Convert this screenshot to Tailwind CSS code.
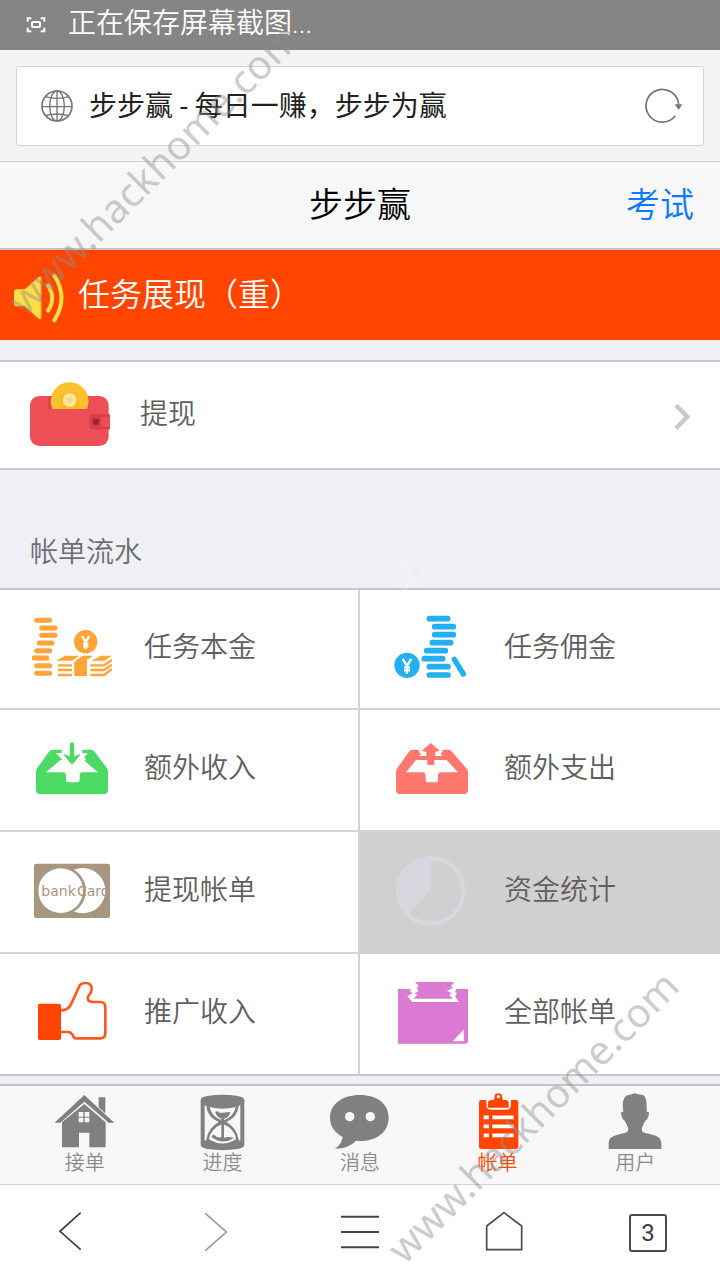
<!DOCTYPE html>
<html lang="zh-CN">
<head>
<meta charset="utf-8">
<meta name="viewport" content="width=device-width, initial-scale=1">
<title>步步赢</title>
<script src="https://cdn.jsdelivr.net/npm/@tailwindcss/browser@4"></script>
</head>
<body class="bg-[#efeff4] font-[Roboto,'Noto_Sans_CJK_SC',sans-serif] font-[350] text-[#5f5f5f]">
<div class="relative flex min-h-screen flex-col overflow-hidden">

  <!-- System status bar -->
  <div class="flex h-[50px] items-center gap-5 bg-[#858585] px-6 text-white">
    <svg class="size-6" viewBox="72 38 72 72" fill="none" stroke="#fff" stroke-width="6" aria-hidden="true">
      <path d="M83 64V54h11M122 54h11v10M133 82v11h-11M94 93H83V82"/><rect x="96" y="65" width="24" height="15" rx="3"/>
    </svg>
    <span class="pb-[2px] text-[28px] leading-[42px]">正在保存屏幕截图...</span>
  </div>

  <!-- Browser address bar -->
  <div class="border-b border-[#cfcfcf] bg-[#f4f4f4] px-4 pt-4 pb-[15px]">
    <div class="flex h-20 items-center rounded-xs border border-[#d6d6d6] bg-white px-6">
      <svg class="size-8 shrink-0" viewBox="123 268 96 96" fill="none" stroke="#757575" stroke-width="5" aria-hidden="true">
        <circle cx="171" cy="316" r="45"/><ellipse cx="171" cy="316" rx="22" ry="45" stroke-width="4"/>
        <path d="M171 271v90M126 318h90M135 288q36 10 72 0M135 345q36-10 72 0" stroke-width="4"/>
      </svg>
      <input type="text" aria-label="网址" value="步步赢 - 每日一赚，步步为赢" class="ml-4 h-14 min-w-0 flex-1 pb-1 text-[28px] font-normal text-[#222] outline-none">
      <button type="button" aria-label="刷新" class="-mr-1 size-10">
        <svg class="size-10" viewBox="849 257 120 120" fill="none" stroke="#757575" stroke-width="5">
          <path d="M946 346a49 49 0 1 1 10-33"/><path d="M944 312h23l-11 16z" fill="#757575" stroke="none"/>
        </svg>
      </button>
    </div>
  </div>

  <!-- Page title bar -->
  <header class="grid h-[88px] grid-cols-3 items-center border-b-2 border-[#c4c4c6] bg-[#f7f7f8] px-[26px] text-[34px] leading-[50px]">
    <h1 class="col-start-2 text-center font-[350] text-black">步步赢</h1>
    <a href="#exam" class="justify-self-end text-[#0a7bff]">考试</a>
  </header>

  <main>
    <a href="#tasks" class="flex h-[90px] items-center gap-[10px] bg-[#ff4500] pl-3 text-white">
      <svg class="size-14" viewBox="36 81 168 168" fill="#ffdd44" aria-hidden="true">
        <path d="M49 148h25l42-37q8-4 8 5v116q0 9-8 4l-42-37H49q-7 0-7-7v-37q0-7 7-7z"/>
        <path d="M123 113v122" stroke="#e89a25" stroke-width="3"/>
        <path d="M144 137q25 36 0 75M163 107q43 66 0 134" fill="none" stroke="#ffdd44" stroke-width="12" stroke-linecap="round"/>
      </svg>
      <span class="text-[32px] leading-[48px]">任务展现（重）</span>
    </a>

    <a href="#withdraw" class="mt-5 flex h-[110px] items-center border-y-2 border-[#c8c7cc] bg-white px-[30px]">
      <svg class="size-20" viewBox="90 405 240 240" aria-hidden="true">
        <rect x="90" y="468" width="236" height="150" rx="28" fill="#ee4e55"/>
        <path d="M145 507v-25q0-14 8-14h106q9 0 9 14v25z" fill="#d9444b"/>
        <path d="M157 507a57 57 0 1 1 104 0z" fill="#fcc12d"/>
        <path d="M180 507v-24a28 28 0 0 1 58 0v24z" fill="#fbb91f"/>
        <circle cx="209" cy="480" r="21" fill="#fde59a"/><circle cx="209" cy="480" r="8" fill="#fbd978"/>
        <path d="M330 523h-52q-9 0-9 9v27q0 9 9 9h52z" fill="#d63f4b"/><path d="M330 530h-27v30h27z" fill="#ee4e55"/>
        <circle cx="288" cy="545" r="10" fill="#a8242d"/>
      </svg>
      <span class="ml-[30px] text-[28px] leading-[42px]">提现</span>
      <svg class="mt-1 -mr-[2px] ml-auto h-7 w-5" viewBox="217 128 60 84" fill="none" stroke="#c7c7cc" stroke-width="13" aria-hidden="true"><path d="M229 135l34 34-34 35"/></svg>
    </a>

    <h2 class="flex h-[118px] items-end px-[30px] pb-[14px] text-[28px] leading-[42px] font-[350] text-[#6d6d72]">帐单流水</h2>

    <nav aria-label="帐单流水" class="grid grid-cols-2 grid-rows-[120px_122px_122px_122px] border-t-2 border-[#c8c7cc] text-[28px] leading-[42px]">
      <a href="#principal" class="flex items-center gap-8 border-r-2 border-b-2 border-[#d3d3d6] bg-white px-8">
        <svg class="size-20" viewBox="96 87 240 240" fill="#ffa437" aria-hidden="true">
          <path d="M110 121h39M125 144h40M125 166h40M118 189h38M110 212h39M101 234h39M110 257h39M110 280h39" stroke="#ffa437" stroke-width="15" stroke-linecap="round"/>
          <circle cx="257" cy="185" r="35"/>
          <path d="M246 168l11 18 11-18M257 186v22M249 191h16M249 199h16" fill="none" stroke="#fff" stroke-width="7"/>
          <path d="M230 239l18-12h32l-19 12v49h-38v-42zM171 241l25-14h41l-20 15h-46zM276 241l27-14h33l-23 15h-37z"/>
          <path d="M174 256h42M174 270h42M174 285h42M271 256h41l24-16M271 270h41l24-16M271 285h41l24-18" fill="none" stroke="#ffa437" stroke-width="7"/>
        </svg>
        <span class="pb-[2px]">任务本金</span>
      </a>
      <a href="#commission" class="flex items-center gap-8 border-b-2 border-[#d3d3d6] bg-white px-8">
        <svg class="size-20" viewBox="126 207 240 240" fill="#22b0f0" aria-hidden="true">
          <path d="M238 236h55M254 260h56M254 284h56M247 308h55M230 332h56M223 356h55M238 380h56M238 405h56" stroke="#22b0f0" stroke-width="17" stroke-linecap="round"/>
          <path d="M313 358l27 44" stroke="#22b0f0" stroke-width="16" stroke-linecap="round"/>
          <circle cx="171" cy="376" r="38"/>
          <path d="M158 357l13 20 13-20M171 377v25M162 382h18M162 391h18" fill="none" stroke="#fff" stroke-width="7"/>
        </svg>
        <span class="pb-[2px]">任务佣金</span>
      </a>
      <a href="#extra-income" class="flex items-center gap-8 border-r-2 border-b-2 border-[#d3d3d6] bg-white px-8">
        <svg class="size-20" viewBox="96 450 240 240" aria-hidden="true">
          <path d="M158 509h116q5 0 10 6l37 50q3 5 3 10v56q0 11-11 11H119q-11 0-11-11v-56q0-5 3-10l36-50q5-6 11-6z" fill="#4cd964"/>
          <path d="M168 519h95l-10 13 6 9h-7l42 36h-46q-9 0-9 9v14q0 7-7 7h-28q-6 0-6-7v-14q0-9-9-9h-51l42-36h8z" fill="#fff"/>
          <path d="M185 507h62v14h-62z" fill="#fff"/>
          <path d="M216 493v45" stroke="#4cd964" stroke-width="13" stroke-linecap="round"/><path d="M192 524l24 9 24-9-24 29z" fill="#4cd964" stroke="#4cd964" stroke-width="3"/>
        </svg>
        <span class="pb-[2px]">额外收入</span>
      </a>
      <a href="#extra-expense" class="flex items-center gap-8 border-b-2 border-[#d3d3d6] bg-white px-8">
        <svg class="size-20" viewBox="126 570 240 240" aria-hidden="true">
          <path d="M188 629h108q5 0 10 6l44 51q4 5 4 10v55q0 11-11 11H149q-11 0-11-11v-55q0-5 3-10l36-51q5-6 11-6z" fill="#ff776f"/>
          <path d="M198 660h92l34 37h-51q-9 0-9 9v13q0 8-8 8h-21q-8 0-8-8v-13q0-9-9-9h-50z" fill="#fff"/>
          <path d="M204 627h76l-8 18 14 4-7 13h-76l-4-13 14-4z" fill="#fff"/>
          <path d="M215 632l27-23 27 23-13 4v12h31v12h-34v14h-21v-14h-34v-12h31v-12z" fill="#ff776f"/>
          <path d="M235 648h16v26h-16z" fill="#ff776f"/>
        </svg>
        <span class="pb-[2px]">额外支出</span>
      </a>
      <a href="#withdrawals" class="flex items-center gap-8 border-r-2 border-b-2 border-[#d3d3d6] bg-white px-8">
        <svg class="size-20" viewBox="96 66 240 240" aria-hidden="true">
          <rect x="102" y="101" width="228" height="163" rx="7" fill="#a99680"/>
          <circle cx="248" cy="182" r="68" fill="#fff"/><circle cx="186" cy="182" r="72" fill="#a99680"/><circle cx="182" cy="182" r="67" fill="#fff"/>
          <text x="124" y="197" font-family="DejaVu Sans, sans-serif" font-size="42" font-weight="400" fill="#a99680">bank</text>
          <text x="231" y="197" font-family="DejaVu Sans, sans-serif" font-size="42" font-weight="400" fill="#a99680">Card</text>
          <path d="M316 145h14v80h-14z" fill="#a99680"/>
        </svg>
        <span class="pb-[2px]">提现帐单</span>
      </a>
      <a href="#stats" class="flex items-center gap-8 border-b-2 border-[#d0d0d2] bg-[#d0d0d0] px-8">
        <svg class="size-20" viewBox="126 66 240 240" aria-hidden="true">
          <circle cx="242" cy="183" r="98" fill="none" stroke="#d7d7e0" stroke-width="13"/>
          <path d="M242 85v98l-66 68a98 98 0 0 1 66-166z" fill="#d7d7e0"/>
        </svg>
        <span class="pb-[2px]">资金统计</span>
      </a>
      <a href="#promotion" class="flex items-center gap-8 border-r-2 border-b-2 border-[#d3d3d6] border-b-[#c8c7cc] bg-white px-8">
        <svg class="size-20" viewBox="96 432 240 240" aria-hidden="true">
          <rect x="114" y="521" width="69" height="109" rx="5" fill="#ff4500"/>
          <path d="M183 541q22-1 30-18 16-35 26-57 5-7 18-7 18 0 18 18 0 10-9 20-6 10 2 17 5 2 13 2h20q15 0 15 17v76q0 16-15 16h-73q-6 0-9-8-5-11-17-11h-19" fill="none" stroke="#ff5a20" stroke-width="8"/>
        </svg>
        <span class="pb-[2px]">推广收入</span>
      </a>
      <a href="#all" class="flex items-center gap-8 border-b-2 border-[#c8c7cc] bg-white px-8">
        <svg class="size-20" viewBox="126 432 240 240" aria-hidden="true">
          <path d="M144 477h210v155q0 9-9 9H144z" fill="#da7ad2"/>
          <path d="M184 472h138l-7 14 6 4-6 9 12 17H187l-15-17 15-9-7-7z" fill="#fff"/>
          <path d="M195 456h117l-9 13 6 4-18 9 14 8-8 5 12 11H190l12-10-8-6 12-6-6-9 6-7z" fill="#da7ad2"/>
          <path d="M341 599v35h-33z" fill="#fff"/>
        </svg>
        <span class="pb-[2px]">全部帐单</span>
      </a>
    </nav>
  </main>

  <!-- App tabs -->
  <nav aria-label="主导航" class="mt-2 grid h-[101px] grid-cols-5 border-t-2 border-b border-t-[#c2c2c4] border-b-[#d2d2d2] bg-[#f7f7f8] px-4 pt-[6px] text-[20px] leading-[22px] text-[#8c8c8c]">
    <a href="#orders" class="flex flex-col items-center">
      <svg class="size-[60px]" viewBox="164 66 180 180" fill="#808080" aria-hidden="true">
        <path d="M295 82h20v48l-20-18z"/><path d="M252 75l90 83h-17l-73-63-72 63h-17z"/><path d="M252 102l64 55v75h-49v-44h-31v44h-51v-75z"/>
        <path d="M235 126h14v14h-14zM253 126h14v14h-14zM235 143h14v14h-14zM253 143h14v14h-14z" fill="#f7f7f8"/>
      </svg>接单</a>
    <a href="#progress" class="flex flex-col items-center">
      <svg class="size-[60px]" viewBox="577 66 180 180" aria-hidden="true">
        <path d="M603 90q0-9 20-12 46-7 92 0 19 3 19 12v134q0 9-19 13-46 7-92 0-20-4-20-13z" fill="#808080"/>
        <path d="M615 105l5 3q3 33 37 48-32 18-37 53l-5 5zM722 105l-5 3q-3 33-37 48 32 18 37 53l5 5z" fill="#f7f7f8"/>
        <path d="M630 111q38 10 78 0-5 29-36 40l-3 4-3-4q-31-11-36-40zM669 161q38 16 40 47-40 25-81 0 3-31 41-47z" fill="#f7f7f8"/>
        <path d="M646 126q9-6 14 3 14-1 32-3-3 18-23 22-16-5-23-22zM665 145h8v58q14-4 30 1-34 22-67-2 1-11 10-6 4 8 19 6z" fill="#808080"/>
      </svg>进度</a>
    <a href="#messages" class="flex flex-col items-center">
      <svg class="size-[60px]" viewBox="-90 66 180 180" aria-hidden="true">
        <path d="M0 75c52 0 86 27 86 68 0 45-39 70-86 70l-12-1q-21 23-63 24 19-12 23-35c-25-14-38-33-38-58 0-41 38-68 90-68z" fill="#808080"/>
        <circle cx="-31" cy="140" r="14" fill="#f7f7f8"/><circle cx="31" cy="140" r="14" fill="#f7f7f8"/>
      </svg>消息</a>
    <a href="#bills" aria-current="page" class="flex flex-col items-center text-[#ff4500]">
      <svg class="size-[60px]" viewBox="323 66 180 180" aria-hidden="true">
        <path d="M363 90h15v14q0 15 15 15h44q15 0 15-15V90h15q7 0 7 7v132q0 8-8 8H364q-8 0-8-8V97q0-7 7-7z" fill="#ff4500"/>
        <path d="M383 113V99q0-8 9-9h7q4-2 4-11 0-9 11-9t11 9q0 9 4 11h7q9 1 9 9v14z" fill="#ff4500"/>
        <circle cx="414" cy="80" r="5" fill="#f7f7f8"/>
        <path d="M370 142h16M396 142h64M370 169h16M396 169h64M370 196h16M396 196h64" stroke="#fff" stroke-width="11"/>
      </svg>帐单</a>
    <a href="#user" class="flex flex-col items-center">
      <svg class="size-[60px]" viewBox="736 66 180 180" aria-hidden="true">
        <path d="M791 125q-6-36 8-48l17-4 9-3 10 3 14 2q14 4 12 50 10-1 6 10-4 16-11 18l-9 20q-3 13 10 16c31 7 48 11 48 32v16H747v-16c0-21 17-25 48-32q14-4 10-16l-9-20q-7-2-11-18-4-11 6-10z" fill="#808080"/>
      </svg>用户</a>
  </nav>

  <!-- Browser toolbar -->
  <div class="grid min-h-[95px] flex-1 grid-cols-5 place-items-center bg-white">
    <button type="button" aria-label="后退"><svg class="size-12" viewBox="144 417 144 144" fill="none" stroke="#3c3c3c" stroke-width="5"><path d="M242 428l-62 56 62 55"/></svg></button>
    <button type="button" aria-label="前进"><svg class="size-12" viewBox="576 417 144 144" fill="none" stroke="#9b9b9b" stroke-width="5"><path d="M616 430l63 56-63 56"/></svg></button>
    <button type="button" aria-label="菜单"><svg class="size-12" viewBox="-72 417 144 144" stroke="#444" stroke-width="6"><path d="M-57 440H57M-57 486H57M-57 532H57"/></svg></button>
    <button type="button" aria-label="主页"><svg class="size-12" viewBox="360 417 144 144" fill="none" stroke="#4a4a4a" stroke-width="5" stroke-linejoin="round"><path d="M432 428l53 40v71H380v-71z"/></svg></button>
    <button type="button" aria-label="标签页" class="flex h-[38px] w-[38px] items-center justify-center rounded-[3px] border-2 border-[#4a4a4a] text-[24px] leading-none font-normal text-[#3c3c3c]">3</button>
  </div>

  <!-- Watermarks laid over the page -->
  <div aria-hidden="true" class="pointer-events-none font-['Noto_Sans',sans-serif] text-[40px] leading-none font-normal whitespace-nowrap text-[#8c8c8c]/45">
    <span class="absolute top-[281px] left-[29px] origin-bottom-left -rotate-45">www.hackhome.com</span>
    <span class="absolute top-[1229px] left-[408px] origin-bottom-left -rotate-45">www.hackhome.com</span>
    <span class="absolute top-[554px] left-[386px] -rotate-45 font-['Noto_Sans_CJK_SC',sans-serif] text-[36px] text-white/25">站</span>
  </div>
</div>
</body>
</html>
